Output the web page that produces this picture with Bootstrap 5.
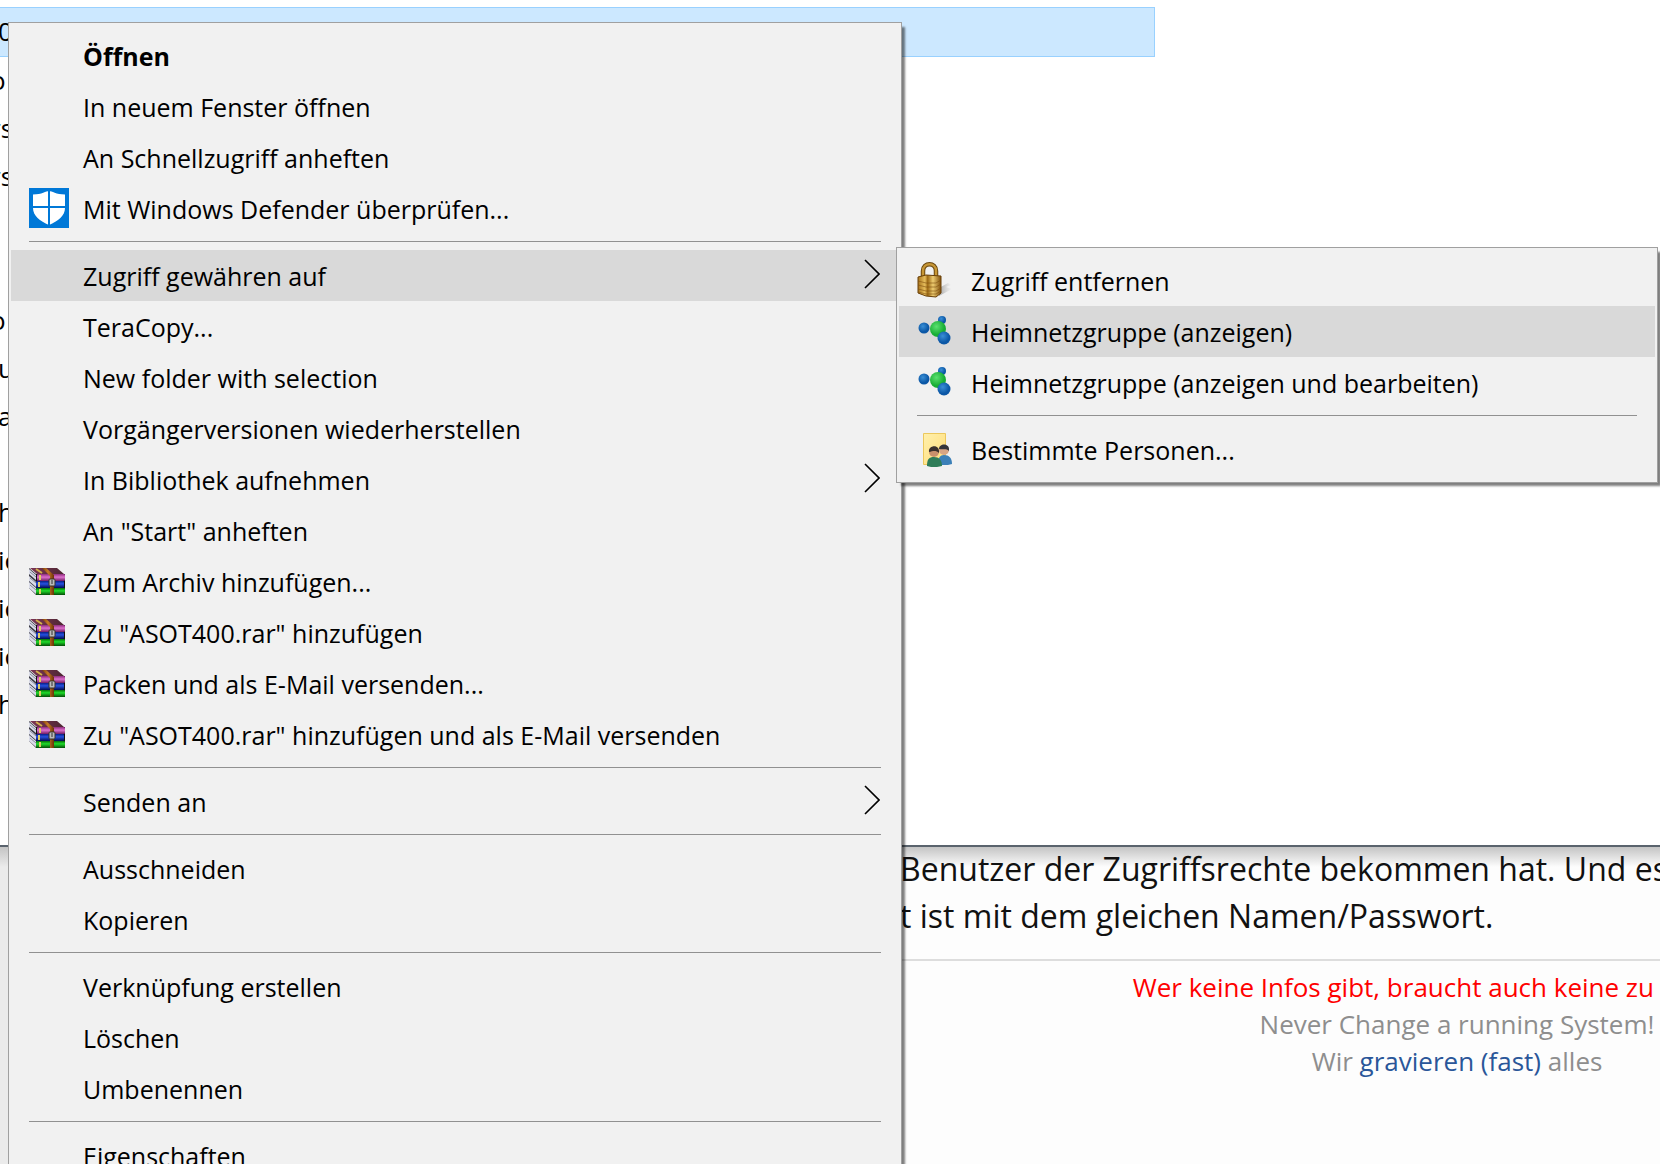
<!DOCTYPE html>
<html lang="de">
<head>
<meta charset="utf-8">
<meta name="viewport" content="width=device-width, initial-scale=1">
<title>Kontextmenü</title>
<link href="https://cdn.jsdelivr.net/npm/bootstrap@5.3.0/dist/css/bootstrap.min.css" rel="stylesheet">
<style>
  body { font-family: "Open Sans", "Noto Sans", sans-serif; font-size: 26px; color: #000; background: #fdfdfd; }
  .explorer { background: #fff; border-bottom: 2px solid #5a636d; padding: 7px 0 116px; }
  .file-row { height: 48px; line-height: 46px; white-space: nowrap; overflow: hidden; text-indent: -2px; }
  .file-row.shifted { text-indent: -10px; }
  .file-row.selected { width: 1155px; max-width: 100%; height: 50px; background: #cce8ff; border: 1px solid #99d1ff; border-left: 0; }
  .forum { background: linear-gradient(#c4c4c4, rgba(253,253,253,0) 20px); }
  .gutter { width: 8px; background: linear-gradient(#c4c4c4, #ebebeb 20px); }
  .post { margin-left: 892px; min-width: 0; }
  .post-text { font-size: 32px; line-height: 47px; color: #111; white-space: nowrap; margin-top: -2px; height: 116px; border-bottom: 2px solid #ddd; }
  .signature { line-height: 37px; color: #8e8e8e; padding-top: 8px; white-space: nowrap; }
  .signature .centered { width: 406px; }
  .signature a { color: #2a5699; }
  .sig-alert { color: #f00; padding-right: 6px; }

  .context-menu { --bs-dropdown-bg: #f1f1f1; padding: 7px 2px; border: 1px solid #a0a0a0; border-radius: 0; font-size: 25px; box-shadow: 4px 4px 2px -1px rgba(0,0,0,.5); }
  .main-menu { left: 8px; top: 22px; width: 894px; }
  .sub-menu { left: 896px; top: 247px; width: 762px; }
  .context-menu .dropdown-item { height: 51px; padding: 3px 19px 0 18px; color: #000; }
  .context-menu .dropdown-item.current { background: #d9d9d9; }
  .context-menu .dropdown-divider { margin: 7px 18px 8px; border-top: 1px solid #919191; opacity: 1; }
  .item-icon { width: 40px; height: 40px; flex: none; margin: 2px 14px 0 0; align-self: flex-start; }
  .item-arrow { width: 16px; height: 30px; flex: none; margin: 6px 0 0 auto; align-self: flex-start; }
</style>
</head>
<body>
<svg class="position-absolute" width="0" height="0" aria-hidden="true">
  <defs>
    <linearGradient id="gPink" x2="0" y2="1"><stop stop-color="#8d2c7c"/><stop offset=".45" stop-color="#dd70cc"/><stop offset="1" stop-color="#701c62"/></linearGradient>
    <linearGradient id="gBlue" x2="0" y2="1"><stop stop-color="#0a1f86"/><stop offset=".4" stop-color="#2650e0"/><stop offset="1" stop-color="#020b50"/></linearGradient>
    <linearGradient id="gGreen" x2="0" y2="1"><stop stop-color="#087008"/><stop offset=".4" stop-color="#1fdc2a"/><stop offset="1" stop-color="#044c06"/></linearGradient>
    <linearGradient id="gTop" x2="1" y2="0"><stop stop-color="#7b3554"/><stop offset="1" stop-color="#4d2632"/></linearGradient>
    <linearGradient id="gBelt" x2="1" y2="0"><stop stop-color="#7a3c08"/><stop offset=".5" stop-color="#c87c28"/><stop offset="1" stop-color="#6b3206"/></linearGradient>
    <linearGradient id="gLock" x2="1" y2="0"><stop stop-color="#a8741c"/><stop offset=".3" stop-color="#e6bd5c"/><stop offset=".42" stop-color="#9c6914"/><stop offset=".65" stop-color="#edcb70"/><stop offset="1" stop-color="#80500c"/></linearGradient>
    <radialGradient id="gDotGreen" cx=".4" cy=".35"><stop stop-color="#5be070"/><stop offset="1" stop-color="#18ae35"/></radialGradient>
    <radialGradient id="gDotBlue" cx=".4" cy=".35"><stop stop-color="#3a8fd6"/><stop offset="1" stop-color="#0b57a6"/></radialGradient>
    <linearGradient id="gFolder" x2="1" y2="1"><stop stop-color="#fff0ac"/><stop offset="1" stop-color="#ffdc78"/></linearGradient>
    <linearGradient id="gShade" x2="1" y2="0"><stop stop-color="#888" stop-opacity=".75"/><stop offset="1" stop-color="#bbb" stop-opacity="0"/></linearGradient>
  </defs>
  <symbol id="ic-shield" viewBox="0 0 40 40">
    <path fill="#0078d7" d="M0 0h40v40H0z"/>
    <path fill="#fff" d="M20 3c-3 0-7 3.500-16 3.500V20c0 8 7 13 16 17 9-4 16-9 16-17V6.500C27 6.500 23 3 20 3z"/>
    <path fill="#0078d7" d="M19 2h2v36h-2zM3 18h34v2H3z"/>
  </symbol>
  <symbol id="ic-rar" viewBox="0 0 40 40">
    <path fill="#3a3a42" d="M0 7l7 6v21L0 27z"/>
    <path fill="#d9dbe8" d="M0 8l7 6v5l-7-6zM0 15l7 6v5l-7-6zM0 21l7 6v6l-7-6z"/>
    <path stroke="#8b8da0" fill="none" d="M1 11l6 5M1 17l6 5M1 24l6 5"/>
    <path fill="url(#gTop)" d="M1 7h27l7 6H8z"/>
    <path stroke="#d4b04c" fill="none" stroke-width="2" d="M7 8l6 4"/>
    <path fill="#111" d="M7 13h29v21H7z"/>
    <rect x="8" y="13" width="28" height="7" rx="1" fill="url(#gPink)"/>
    <rect x="7" y="20" width="28" height="7" rx="1" fill="url(#gBlue)"/>
    <rect x="7" y="27" width="29" height="7" rx="1" fill="url(#gGreen)"/>
    <path stroke="#e0cc60" fill="none" stroke-width="2" d="M11 14v5M10 21v5M11 28v5"/>
    <path fill="url(#gBelt)" d="M13 7h4l8 7v20h-4V15z"/>
    <rect x="20" y="18" width="6" height="7" rx="1" fill="#bbb" stroke="#35312a"/>
    <path stroke="#333" d="M23 19v4"/>
  </symbol>
  <symbol id="ic-lock" viewBox="0 0 40 40">
    <path fill="url(#gShade)" d="M22 28l9-5 3 2-5 2 6 2-13 7z"/>
    <path fill="none" stroke="#68450c" stroke-width="4.500" d="M6 18V11c0-9 13-9 13 0v8"/>
    <path fill="none" stroke="#c69636" stroke-width="2.500" d="M6 18V11c0-9 13-9 13 0v8"/>
    <path fill="url(#gLock)" stroke="#694009" d="M1 17l8-2 15 1v17l-5 4-10-1-8-3z"/>
    <path fill="none" stroke="#805010" stroke-opacity=".6" d="M1 21l8 2h10l5-3M1 25l8 2h10l5-3M1 29l8 2h10l5-3M1 32l8 2h10l5-3"/>
  </symbol>
  <symbol id="ic-home" viewBox="0 0 40 40">
    <circle cx="25" cy="9" r="4" fill="url(#gDotBlue)"/>
    <circle cx="7" cy="17" r="5.500" fill="url(#gDotBlue)"/>
    <circle cx="21" cy="18" r="8" fill="url(#gDotGreen)"/>
    <circle cx="27" cy="27" r="6.500" fill="url(#gDotBlue)"/>
  </symbol>
  <symbol id="ic-people" viewBox="0 0 40 40">
    <path fill="url(#gFolder)" stroke="#ecc85c" d="M6.500 4.500h22v31h-22z"/>
    <path fill="#3c80b8" d="M21 35c0-6 2-9 6-9 5 0 8 3 8 9l-4 1h-8z"/>
    <circle cx="27" cy="21" r="5" fill="#d8a584"/>
    <path fill="#34343a" d="M22 20c0-6 10-6 10 0v2c-3-3-6-1-10-2z"/>
    <path fill="#2f7d58" d="M10 37c0-7 2-9 7-9 5 0 8 3 8 9l-5 1h-6z"/>
    <circle cx="17" cy="23" r="5" fill="#c9906c"/>
    <path fill="#3a302c" d="M12 23c-1-7 10-8 10-1v2c-3-3-6-2-10-1z"/>
  </symbol>
  <symbol id="ic-arrow" viewBox="0 0 16 30">
    <path fill="none" stroke="#000" stroke-width="1.600" d="M1 1l14 14L1 29"/>
  </symbol>
</svg>

<main class="position-relative vh-100 overflow-hidden d-flex flex-column">
  <section class="explorer">
    <div class="file-row selected">0</div>
    <div class="file-row shifted">o</div>
    <div class="file-row shifted">rs</div>
    <div class="file-row shifted">rs</div>
    <div class="file-row"></div>
    <div class="file-row"></div>
    <div class="file-row shifted">o</div>
    <div class="file-row">u</div>
    <div class="file-row">a</div>
    <div class="file-row"></div>
    <div class="file-row">h</div>
    <div class="file-row">ic</div>
    <div class="file-row">ic</div>
    <div class="file-row">ic</div>
    <div class="file-row">h</div>
  </section>
  <section class="forum d-flex flex-grow-1">
    <div class="gutter flex-shrink-0"></div>
    <article class="post flex-grow-1">
      <div class="post-text">Benutzer der Zugriffsrechte bekommen hat. Und es<br>t ist mit dem gleichen Namen/Passwort.</div>
      <footer class="signature d-flex flex-column align-items-end">
        <div class="sig-alert">Wer keine Infos gibt, braucht auch keine zu</div>
        <div class="centered text-center">Never Change a running System!</div>
        <div class="centered text-center">Wir <a href="#" class="text-decoration-none">gravieren (fast)</a> alles</div>
      </footer>
    </article>
  </section>

  <ul class="dropdown-menu context-menu main-menu show">
    <li><button class="dropdown-item d-flex align-items-center fw-bold" type="button"><span class="item-icon"></span>Öffnen</button></li>
    <li><button class="dropdown-item d-flex align-items-center" type="button"><span class="item-icon"></span>In neuem Fenster öffnen</button></li>
    <li><button class="dropdown-item d-flex align-items-center" type="button"><span class="item-icon"></span>An Schnellzugriff anheften</button></li>
    <li><button class="dropdown-item d-flex align-items-center" type="button"><svg class="item-icon"><use href="#ic-shield"/></svg>Mit Windows Defender überprüfen...</button></li>
    <li><hr class="dropdown-divider"></li>
    <li><button class="dropdown-item d-flex align-items-center current" type="button"><span class="item-icon"></span>Zugriff gewähren auf<svg class="item-arrow"><use href="#ic-arrow"/></svg></button></li>
    <li><button class="dropdown-item d-flex align-items-center" type="button"><span class="item-icon"></span>TeraCopy...</button></li>
    <li><button class="dropdown-item d-flex align-items-center" type="button"><span class="item-icon"></span>New folder with selection</button></li>
    <li><button class="dropdown-item d-flex align-items-center" type="button"><span class="item-icon"></span>Vorgängerversionen wiederherstellen</button></li>
    <li><button class="dropdown-item d-flex align-items-center" type="button"><span class="item-icon"></span>In Bibliothek aufnehmen<svg class="item-arrow"><use href="#ic-arrow"/></svg></button></li>
    <li><button class="dropdown-item d-flex align-items-center" type="button"><span class="item-icon"></span>An "Start" anheften</button></li>
    <li><button class="dropdown-item d-flex align-items-center" type="button"><svg class="item-icon"><use href="#ic-rar"/></svg>Zum Archiv hinzufügen...</button></li>
    <li><button class="dropdown-item d-flex align-items-center" type="button"><svg class="item-icon"><use href="#ic-rar"/></svg>Zu "ASOT400.rar" hinzufügen</button></li>
    <li><button class="dropdown-item d-flex align-items-center" type="button"><svg class="item-icon"><use href="#ic-rar"/></svg>Packen und als E-Mail versenden...</button></li>
    <li><button class="dropdown-item d-flex align-items-center" type="button"><svg class="item-icon"><use href="#ic-rar"/></svg>Zu "ASOT400.rar" hinzufügen und als E-Mail versenden</button></li>
    <li><hr class="dropdown-divider"></li>
    <li><button class="dropdown-item d-flex align-items-center" type="button"><span class="item-icon"></span>Senden an<svg class="item-arrow"><use href="#ic-arrow"/></svg></button></li>
    <li><hr class="dropdown-divider"></li>
    <li><button class="dropdown-item d-flex align-items-center" type="button"><span class="item-icon"></span>Ausschneiden</button></li>
    <li><button class="dropdown-item d-flex align-items-center" type="button"><span class="item-icon"></span>Kopieren</button></li>
    <li><hr class="dropdown-divider"></li>
    <li><button class="dropdown-item d-flex align-items-center" type="button"><span class="item-icon"></span>Verknüpfung erstellen</button></li>
    <li><button class="dropdown-item d-flex align-items-center" type="button"><span class="item-icon"></span>Löschen</button></li>
    <li><button class="dropdown-item d-flex align-items-center" type="button"><span class="item-icon"></span>Umbenennen</button></li>
    <li><hr class="dropdown-divider"></li>
    <li><button class="dropdown-item d-flex align-items-center" type="button"><span class="item-icon"></span>Eigenschaften</button></li>
  </ul>

  <ul class="dropdown-menu context-menu sub-menu show">
    <li><button class="dropdown-item d-flex align-items-center" type="button"><svg class="item-icon"><use href="#ic-lock"/></svg>Zugriff entfernen</button></li>
    <li><button class="dropdown-item d-flex align-items-center current" type="button"><svg class="item-icon"><use href="#ic-home"/></svg>Heimnetzgruppe (anzeigen)</button></li>
    <li><button class="dropdown-item d-flex align-items-center" type="button"><svg class="item-icon"><use href="#ic-home"/></svg>Heimnetzgruppe (anzeigen und bearbeiten)</button></li>
    <li><hr class="dropdown-divider"></li>
    <li><button class="dropdown-item d-flex align-items-center" type="button"><svg class="item-icon"><use href="#ic-people"/></svg>Bestimmte Personen...</button></li>
  </ul>
</main>
<script src="https://cdn.jsdelivr.net/npm/bootstrap@5.3.0/dist/js/bootstrap.bundle.min.js"></script>
</body>
</html>
